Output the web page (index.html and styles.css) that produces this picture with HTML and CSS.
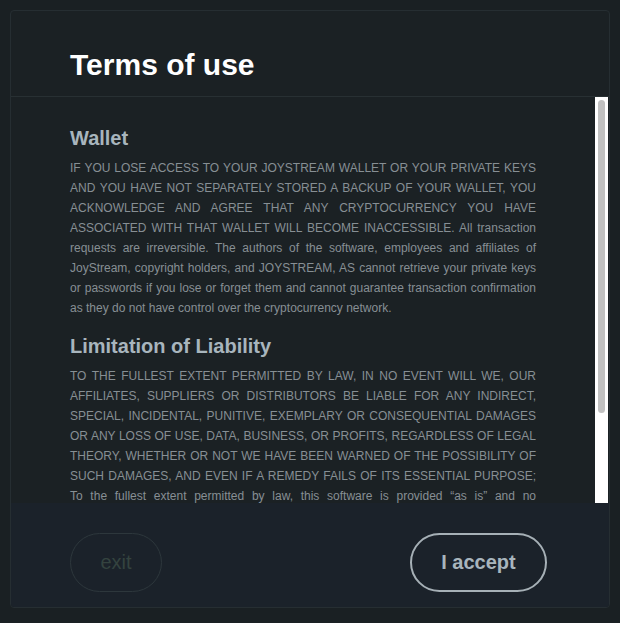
FILE: index.html
```html
<!DOCTYPE html>
<html lang="en">
<head>
<meta charset="UTF-8" />
<meta name="viewport" content="width=device-width, initial-scale=1" />
<title>Terms of use</title>
<link rel="stylesheet" href="styles.css">
</head>
<body>

<div class="modal">
  <!-- Header -->
  <div class="modalHeader">
    <h1>Terms of use</h1>
  </div>

  <!-- Terms with scrollbar -->
  <div class="modalBody">
    <div class="termsText">
      <h2>Wallet</h2>
      <p>IF YOU LOSE ACCESS TO YOUR JOYSTREAM WALLET OR YOUR PRIVATE KEYS AND YOU HAVE NOT SEPARATELY STORED A BACKUP OF YOUR WALLET, YOU ACKNOWLEDGE AND AGREE THAT ANY CRYPTOCURRENCY YOU HAVE ASSOCIATED WITH THAT WALLET WILL BECOME INACCESSIBLE. All transaction requests are irreversible. The authors of the software, employees and affiliates of JoyStream, copyright holders, and JOYSTREAM, AS cannot retrieve your private keys or passwords if you lose or forget them and cannot guarantee transaction confirmation as they do not have control over the cryptocurrency network.</p>

      <h2>Limitation of Liability</h2>
      <p>TO THE FULLEST EXTENT PERMITTED BY LAW, IN NO EVENT WILL WE, OUR AFFILIATES, SUPPLIERS OR DISTRIBUTORS BE LIABLE FOR ANY INDIRECT, SPECIAL, INCIDENTAL, PUNITIVE, EXEMPLARY OR CONSEQUENTIAL DAMAGES OR ANY LOSS OF USE, DATA, BUSINESS, OR PROFITS, REGARDLESS OF LEGAL THEORY, WHETHER OR NOT WE HAVE BEEN WARNED OF THE POSSIBILITY OF SUCH DAMAGES, AND EVEN IF A REMEDY FAILS OF ITS ESSENTIAL PURPOSE; To the fullest extent permitted by law, this software is provided “as is” and no representations or warranties of any kind are made, express or implied, including but not limited to warranties of merchantability, fitness for a particular purpose and non-infringement.</p>
    </div>
    <div class="scrollTrack">
      <div class="scrollThumb"></div>
    </div>
  </div>

  <!-- Buttons -->
  <div class="modalFooter">
    <button class="pillBtn exitBtn" disabled>exit</button>
    <button class="pillBtn acceptBtn">I accept</button>
  </div>
</div>

</body>
</html>
```

FILE: styles.css
```css
body {
  margin: 0;
  background: #1a2023;
  font-family: "Liberation Sans", Arial, sans-serif;
}

.modal {
  margin: 10px;
  height: 596px;
  border: 1px solid #262e32;
  border-radius: 4px;
  background: #1b2124;
  display: flex;
  flex-direction: column;
  overflow: hidden;
}

/* Header */
.modalHeader {
  height: 63px;
  flex: none;
  border-bottom: 1px solid #283033;
  padding: 22px 0 0 59px;
  display: flex;
  align-items: center;
}
.modalHeader h1 {
  margin: 0;
  color: #ffffff;
  font-size: 30px;
  font-weight: bold;
}

/* Terms body */
.modalBody {
  height: 406px;
  flex: none;
  display: flex;
}
.termsText {
  flex: 1;
  overflow: hidden;
  padding: 29px 59px 0 59px;
}
.scrollTrack {
  width: 7px;
  padding: 3px;
  margin-right: 1px;
  background: #ffffff;
}
.scrollThumb {
  height: 313px;
  background: #c1c1c1;
  border-radius: 4px;
}
.termsText h2 {
  margin: 16px 0 8px;
  color: #a8b5bd;
  font-size: 20px;
  line-height: 24px;
  font-weight: bold;
}
.termsText h2:first-child {
  margin-top: 0;
}
.termsText p {
  margin: 0;
  color: #878f94;
  font-size: 12px;
  line-height: 20px;
  text-align: justify;
}

/* Footer buttons */
.modalFooter {
  flex: 1;
  background: #1b222a;
  padding: 30px 62px 0 59px;
  display: flex;
  justify-content: space-between;
  align-items: flex-start;
}
.pillBtn {
  height: 59px;
  border-radius: 30px;
  background: transparent;
  font-family: "Liberation Sans", Arial, sans-serif;
  font-size: 20px;
  font-weight: bold;
  cursor: pointer;
}
.exitBtn {
  width: 92px;
  border: 1px solid #2d373c;
  color: #34433f;
  font-weight: normal;
  cursor: default;
}
.acceptBtn {
  width: 137px;
  border: 2px solid #a6b0b6;
  color: #a8b5bd;
}
```
